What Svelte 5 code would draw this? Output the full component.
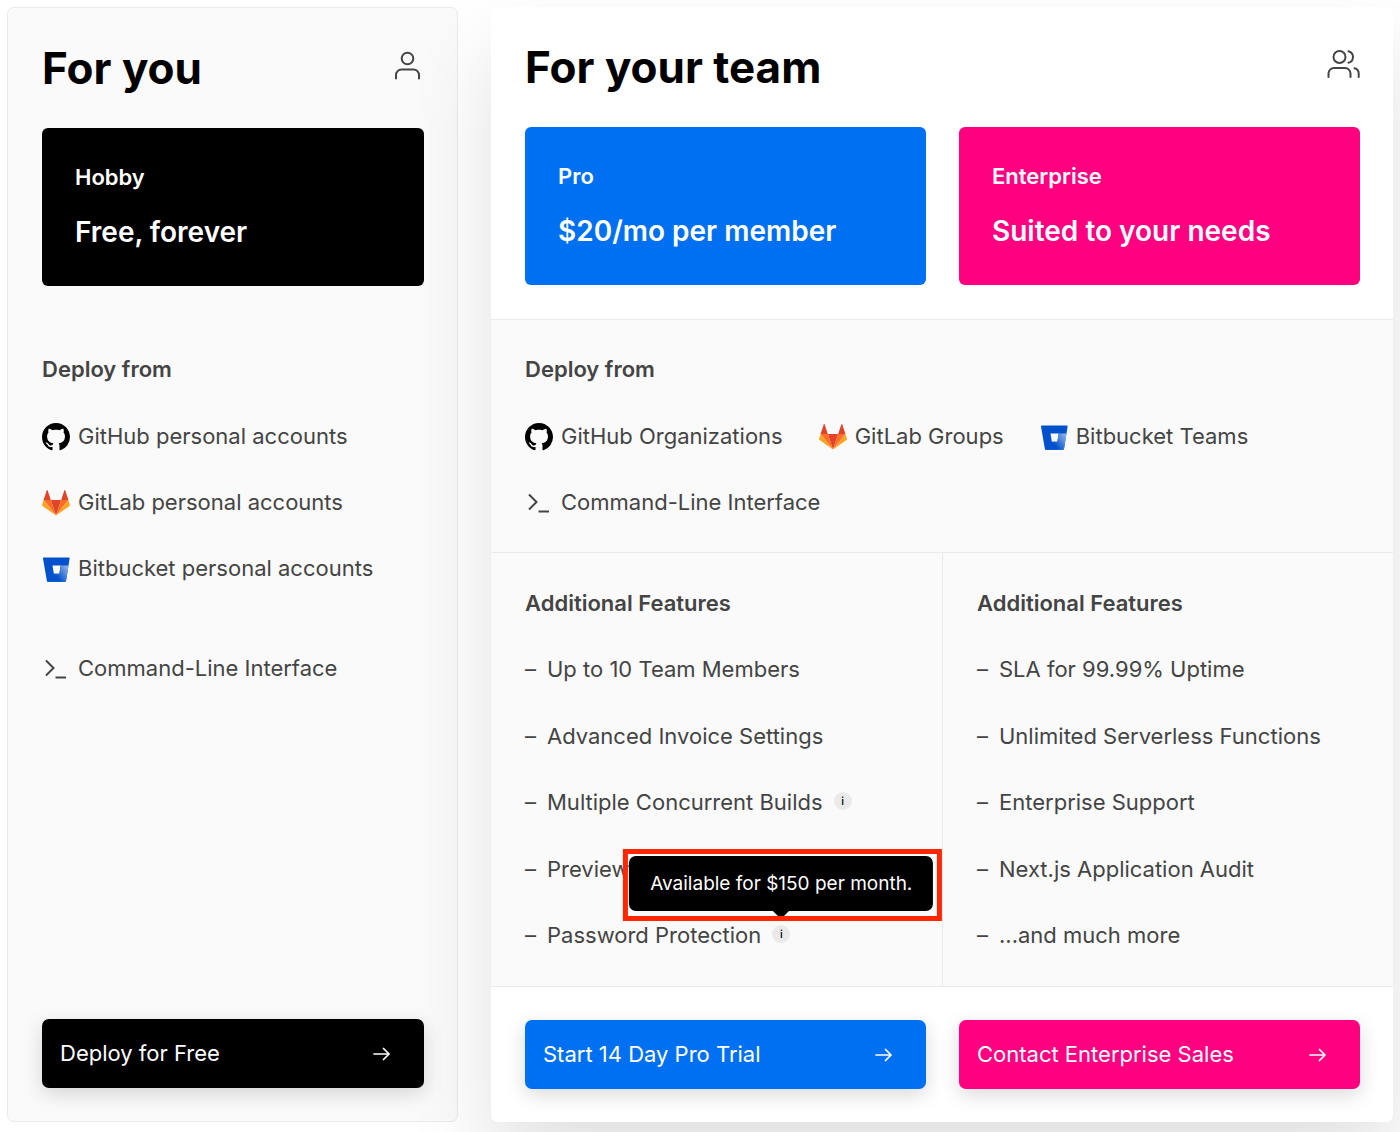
<script lang="ts">
  type Provider = 'github' | 'gitlab' | 'bitbucket' | 'cli';

  interface Source {
    icon: Provider;
    label: string;
  }

  interface Feature {
    label: string;
    info?: string;
    open?: boolean;
  }

  const personalSources: Source[] = [
    { icon: 'github', label: 'GitHub personal accounts' },
    { icon: 'gitlab', label: 'GitLab personal accounts' },
    { icon: 'bitbucket', label: 'Bitbucket personal accounts' },
    { icon: 'cli', label: 'Command-Line Interface' },
  ];

  const teamSources: Source[] = [
    { icon: 'github', label: 'GitHub Organizations' },
    { icon: 'gitlab', label: 'GitLab Groups' },
    { icon: 'bitbucket', label: 'Bitbucket Teams' },
    { icon: 'cli', label: 'Command-Line Interface' },
  ];

  let proFeatures = $state<Feature[]>([
    { label: 'Up to 10 Team Members' },
    { label: 'Advanced Invoice Settings' },
    { label: 'Multiple Concurrent Builds', info: 'Available for $50 per month.' },
    { label: 'Preview Deployment Suffix' },
    { label: 'Password Protection', info: 'Available for $150 per month.', open: true },
  ]);

  const enterpriseFeatures: Feature[] = [
    { label: 'SLA for 99.99% Uptime' },
    { label: 'Unlimited Serverless Functions' },
    { label: 'Enterprise Support' },
    { label: 'Next.js Application Audit' },
    { label: '...and much more' },
  ];
</script>

{#snippet providerIcon(name: Provider)}
  {#if name === 'github'}
    <svg class="provider" viewBox="0 0 16 16" aria-hidden="true">
      <path fill="#000" fill-rule="evenodd" d="M8 0C3.58 0 0 3.58 0 8c0 3.54 2.29 6.53 5.47 7.59.4.07.55-.17.55-.38 0-.19-.01-.82-.01-1.49-2.01.37-2.53-.49-2.69-.94-.09-.23-.48-.94-.82-1.13-.28-.15-.68-.52-.01-.53.63-.01 1.08.58 1.23.82.72 1.21 1.87.87 2.33.66.07-.52.28-.87.51-1.07-1.78-.2-3.64-.89-3.64-3.95 0-.87.31-1.59.82-2.15-.08-.2-.36-1.02.08-2.12 0 0 .67-.21 2.2.82.64-.18 1.32-.27 2-.27s1.36.09 2 .27c1.53-1.04 2.2-.82 2.2-.82.44 1.1.16 1.92.08 2.12.51.56.82 1.27.82 2.15 0 3.07-1.87 3.75-3.65 3.95.29.25.54.73.54 1.48 0 1.07-.01 1.93-.01 2.2 0 .21.15.46.55.38A8.01 8.01 0 0 0 16 8c0-4.42-3.58-8-8-8z" />
    </svg>
  {:else if name === 'gitlab'}
    <svg class="provider" viewBox="0 0 28 28" aria-hidden="true">
      <path fill="#e24329" d="M14 26.500 19.200 11H8.800z" />
      <path fill="#fc6d26" d="M14 26.500 8.800 11H1.600z" />
      <path fill="#fca326" d="M1.600 11 .1 15.700c-.2.500 0 1 .4 1.300L14 26.500z" />
      <path fill="#e24329" d="M1.600 11h7.200L5.700 1.500c-.2-.5-.8-.5-1 0z" />
      <path fill="#fc6d26" d="M14 26.500 19.200 11h7.200z" />
      <path fill="#fca326" d="M26.400 11l1.500 4.700c.2.500 0 1-.4 1.300L14 26.500z" />
      <path fill="#e24329" d="M26.400 11h-7.200l3.100-9.500c.2-.5.8-.5 1 0z" />
    </svg>
  {:else if name === 'bitbucket'}
    <svg class="provider" viewBox="0 0 28 28" aria-hidden="true">
      <defs>
        <linearGradient id="bucket-shade" x1="27" y1="11" x2="14" y2="21" gradientUnits="userSpaceOnUse">
          <stop offset="0.1" stop-color="#8fb2ea" />
          <stop offset="1" stop-color="#0052cc" />
        </linearGradient>
      </defs>
      <path fill="#0052cc" d="M1.700 2.500h25.200c.5 0 .8.4.7.900l-3.600 22.500c-.1.500-.5.800-1 .8H5.900c-.5 0-.9-.3-1-.8L1 3.400c-.1-.5.2-.9.700-.9zM10.500 10.600l1.300 8.200h5.600l1.300-8.200z" fill-rule="evenodd" />
      <path fill="url(#bucket-shade)" d="M26.400 10.600h-7.700l-1.300 8.200h-5.600l-6.500 7.600c.2.200.4.300.6.300H23c.5 0 .9-.3 1-.8z" />
    </svg>
  {:else}
    <svg class="provider line" viewBox="0 0 28 28" aria-hidden="true">
      <path d="M4 5.500l7.500 7.500L4 20.500M13.500 22.500H24" />
    </svg>
  {/if}
{/snippet}

{#snippet arrow()}
  <svg class="arrow" viewBox="0 0 18 18" aria-hidden="true">
    <path d="M1 9h15M10.500 3.500 16 9l-5.500 5.500" />
  </svg>
{/snippet}

{#snippet features(items: Feature[])}
  <h3>Additional Features</h3>
  <ul class="features">
    {#each items as item (item.label)}
      <li>
        {item.label}
        {#if item.info}
          <span class="info">
            <button
              type="button"
              class="info-button"
              aria-label="About {item.label}"
              aria-expanded={!!item.open}
              onclick={() => (item.open = !item.open)}
            >i</button>
            {#if item.open}
              <span class="tooltip" role="tooltip">{item.info}</span>
            {/if}
          </span>
        {/if}
      </li>
    {/each}
  </ul>
{/snippet}

<main class="pricing">
  <section class="card personal">
    <header class="heading">
      <h2>For you</h2>
      <svg class="people" viewBox="0 0 34 34" width="34" height="34" aria-hidden="true">
        <circle cx="17.500" cy="9.500" r="5.800" />
        <path d="M6 29.500v-3.500a5.500 5.500 0 0 1 5.500-5.500h12a5.500 5.500 0 0 1 5.500 5.500v3.500" />
      </svg>
    </header>

    <div class="plan black">
      <p class="plan-name">Hobby</p>
      <p class="plan-price">Free, forever</p>
    </div>

    <div class="personal-deploy">
      <h3>Deploy from</h3>
      <ul class="sources stacked">
        {#each personalSources as source (source.icon)}
          <li class:separate={source.icon === 'cli'}>{@render providerIcon(source.icon)}{source.label}</li>
        {/each}
      </ul>
    </div>

    <a class="action black" href="#hobby">Deploy for Free {@render arrow()}</a>
  </section>

  <section class="card team">
    <div class="team-top">
      <header class="heading">
        <h2>For your team</h2>
        <svg class="people" viewBox="0 0 34 34" width="34" height="34" aria-hidden="true">
          <circle cx="13.500" cy="9" r="6" />
          <path d="M2.500 29v-3.500A5.500 5.500 0 0 1 8 20h11a5.500 5.500 0 0 1 5.500 5.500v3.500M22.500 3.200a6 6 0 0 1 0 11.600M28.500 20.300a5.500 5.500 0 0 1 4.200 5.400v3.300" />
        </svg>
      </header>
      <div class="pair">
        <div class="plan blue">
          <p class="plan-name">Pro</p>
          <p class="plan-price">$20/mo per member</p>
        </div>
        <div class="plan pink">
          <p class="plan-name">Enterprise</p>
          <p class="plan-price">Suited to your needs</p>
        </div>
      </div>
    </div>

    <div class="team-deploy">
      <h3>Deploy from</h3>
      <ul class="sources">
        {#each teamSources as source (source.icon)}
          <li>{@render providerIcon(source.icon)}{source.label}</li>
        {/each}
      </ul>
    </div>

    <div class="compare">
      <div class="column">{@render features(proFeatures)}</div>
      <div class="column">{@render features(enterpriseFeatures)}</div>
    </div>

    <footer class="pair actions">
      <a class="action blue" href="#pro">Start 14 Day Pro Trial {@render arrow()}</a>
      <a class="action pink" href="#enterprise">Contact Enterprise Sales {@render arrow()}</a>
    </footer>
  </section>
</main>

<style>
  :global(body) {
    margin: 0;
    background: #fff;
  }

  .pricing {
    display: grid;
    grid-template-columns: 1fr 2fr;
    gap: 33px;
    box-sizing: border-box;
    min-height: 100vh;
    padding: 7px 7px 10px;
    overflow: hidden;
    color: #444;
    font-family: Inter, 'Liberation Sans', sans-serif;
    font-size: 22px;
    line-height: 33px;
  }

  h2, h3, p, ul { margin: 0; padding: 0; }
  ul { list-style: none; }
  h2 {
    color: #000;
    font-size: 44px;
    font-weight: 700;
    line-height: 54px;
  }
  h3 {
    font-size: 22px;
    font-weight: 600;
  }

  .card {
    display: flex;
    flex-direction: column;
    min-width: 0;
    border-radius: 7px;
  }
  .personal {
    padding: 33px 33px 33px 34px;
    border: 1px solid #eaeaea;
    background: #fafafa;
  }
  .team {
    background: #fff;
    box-shadow: 0 42px 84px rgba(0, 0, 0, 0.12);
  }

  .heading {
    display: flex;
    justify-content: space-between;
    margin-bottom: 33px;
  }
  .people {
    margin-top: 8px;
    fill: none;
    stroke: #444;
    stroke-width: 2;
    stroke-linecap: round;
    stroke-linejoin: round;
  }

  .plan {
    padding: 33px;
    border-radius: 6px;
    color: #fff;
    font-weight: 600;
  }
  .plan-price {
    margin-top: 17px;
    font-size: 28px;
    line-height: 42px;
  }
  .black { background: #000; }
  .blue { background: #0070f3; }
  .pink { background: #ff0080; }

  .pair {
    display: grid;
    grid-template-columns: 1fr 1fr;
    gap: 33px;
  }

  .personal-deploy {
    flex: 1;
    margin-top: 67px;
  }
  .team-top { padding: 33px 33px 34px 34px; }
  .team-deploy {
    padding: 33px 33px 33px 34px;
    border-top: 1px solid #eaeaea;
    background: #fafafa;
  }

  .sources {
    display: flex;
    flex-wrap: wrap;
    gap: 33px 36px;
    margin-top: 34px;
  }
  .sources.stacked {
    flex-direction: column;
  }
  .sources li {
    display: flex;
    align-items: center;
    gap: 8px;
  }
  .sources .separate { margin-top: 34px; }
  .provider {
    flex-shrink: 0;
    width: 28px;
    height: 28px;
  }
  .line {
    fill: none;
    stroke: #444;
    stroke-width: 2;
  }

  .compare {
    display: grid;
    grid-template-columns: 1fr 1fr;
    flex: 1;
    border-top: 1px solid #eaeaea;
    border-bottom: 1px solid #eaeaea;
    background: #fafafa;
  }
  .column {
    display: flex;
    flex-direction: column;
    padding: 34px;
  }
  .column + .column { border-left: 1px solid #eaeaea; }
  .features {
    display: flex;
    flex: 1;
    flex-direction: column;
    justify-content: space-between;
    margin-top: 33px;
  }
  .features li {
    display: flex;
    align-items: center;
    white-space: nowrap;
  }
  .features li::before {
    content: '–';
    width: 22px;
  }

  .info {
    position: relative;
    display: flex;
    margin: 0 0 4px 11px;
  }
  .info-button {
    width: 18px;
    height: 18px;
    padding: 0;
    border: 0;
    border-radius: 50%;
    background: #eaeaea;
    color: #000;
    font: 500 11px/18px Inter, 'Liberation Sans', sans-serif;
    text-align: center;
    cursor: pointer;
  }
  .tooltip {
    position: absolute;
    bottom: 32px;
    left: 50%;
    padding: 11px 21px;
    border-radius: 7px;
    background: #000;
    color: #fff;
    font-size: 19px;
    transform: translateX(-50%);
  }
  .tooltip::before {
    content: '';
    position: absolute;
    top: 100%;
    left: 50%;
    border: 8px solid transparent;
    border-top-color: #000;
    border-bottom: 0;
    transform: translateX(-50%);
  }
  /* highlight frame round the open tooltip */
  .tooltip::after {
    content: '';
    position: absolute;
    inset: -7px -9px -10px -6px;
    border: 5px solid #ff2600;
  }

  .actions { padding: 33px 33px 33px 34px; }
  .action {
    display: flex;
    align-items: center;
    justify-content: space-between;
    padding: 18px 33px 18px 18px;
    border-radius: 7px;
    box-shadow: 0 6px 20px rgba(0, 0, 0, 0.15);
    color: #fff;
    text-decoration: none;
  }
  .arrow {
    width: 18px;
    height: 18px;
    fill: none;
    stroke: currentColor;
    stroke-width: 1.7;
    stroke-linecap: round;
    stroke-linejoin: round;
  }
</style>
